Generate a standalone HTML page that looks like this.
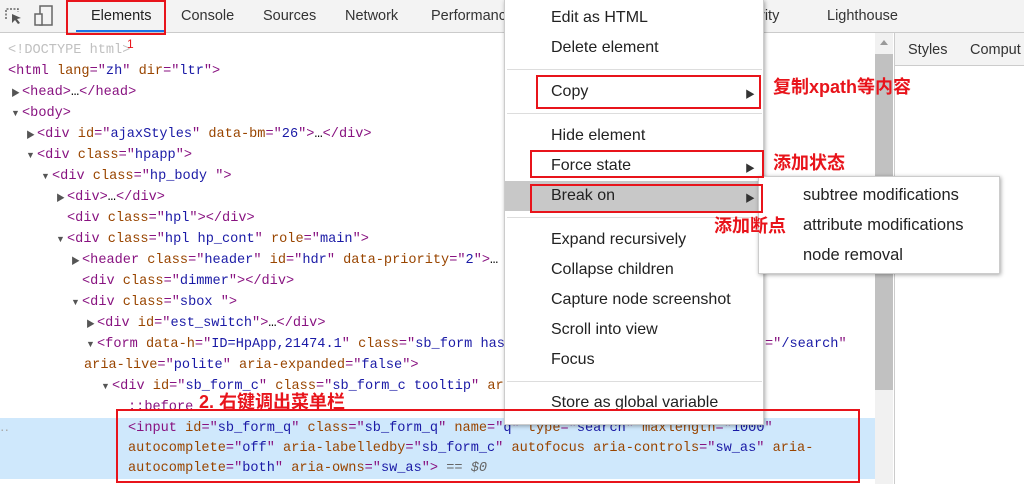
<!DOCTYPE html>
<html><head><meta charset="utf-8"><style>
*{margin:0;padding:0;box-sizing:border-box}
body{width:1024px;height:484px;overflow:hidden;background:#fff;position:relative;font-family:"Liberation Sans","Noto Sans CJK SC",sans-serif}
.a{position:absolute;white-space:nowrap}
.tb{position:absolute;left:0;top:0;width:1024px;height:33px;background:#f3f3f3;border-bottom:1px solid #cbcbcb}
.tab{position:absolute;top:8px;font-size:14.5px;color:#333}
.code{font-family:"Liberation Mono",monospace;font-size:13.6px;line-height:21px}
.t{color:#881280}.n{color:#994500}.v{color:#1a1aa6}.g{color:#aaa}
.tri{position:absolute;font-size:9px;color:#555}
.menu{position:absolute;left:504px;top:0;width:260px;height:425px;background:#fff;box-shadow:1px 1px 4px rgba(0,0,0,.35);border:1px solid #ccc;border-top:none}
.mi{position:absolute;left:46px;font-size:16px;color:#222;white-space:nowrap}
.sep{position:absolute;left:14px;width:262px;height:1px;background:#ddd}
.arr{position:absolute;left:240px;font-size:10px;color:#333}
.rb{position:absolute;border:2px solid #e8141b}
.ann{position:absolute;color:#e8141b;font-weight:bold;font-size:18px;white-space:nowrap}
</style></head><body>
<div class="tb"></div>
<svg class="a" style="left:4px;top:6px" width="20" height="20" viewBox="0 0 20 20"><path d="M2 13V3h12v3" fill="none" stroke="#666" stroke-width="1.5" stroke-dasharray="2 1.5"/><path d="M8 8l9 4-4 1 3 4-2 1-3-4-3 3z" fill="#555"/></svg>
<svg class="a" style="left:34px;top:5px" width="20" height="22" viewBox="0 0 20 22"><rect x="6" y="1" width="12" height="19" fill="none" stroke="#666" stroke-width="1.5"/><rect x="1" y="9" width="7" height="11" fill="#f3f3f3" stroke="#666" stroke-width="1.5"/></svg>
<div class="tab" style="left:91px;color:#222">Elements</div>
<div class="a" style="left:76px;top:30px;width:88px;height:2px;background:#1a73e8"></div>
<div class="tab" style="left:181px">Console</div>
<div class="tab" style="left:263px">Sources</div>
<div class="tab" style="left:345px">Network</div>
<div class="tab" style="left:431px">Performanc</div>
<div class="tab" style="left:760px">rity</div>
<div class="tab" style="left:827px">Lighthouse</div>
<div class="a" style="left:894px;top:33px;width:1px;height:451px;background:#ccc"></div>
<div class="a" style="left:895px;top:33px;width:129px;height:33px;background:#f3f3f3;border-bottom:1px solid #ccc"></div>
<div class="tab" style="left:908px;top:42px">Styles</div>
<div class="tab" style="left:970px;top:42px">Comput</div>
<div class="a" style="left:875px;top:33px;width:18px;height:451px;background:#f1f1f1"></div>
<div class="a" style="left:875px;top:54px;width:18px;height:336px;background:#c1c1c1"></div>
<div class="a" style="left:880px;top:40px;width:0;height:0;border-left:4px solid transparent;border-right:4px solid transparent;border-bottom:5px solid #999"></div>
<div class="a" style="left:0;top:418px;width:875px;height:61px;background:#cfe8fc"></div>
<div class="a code g" style="left:0;top:418px">‥</div>
<div class="code">
<div class="a" style="left:8px;top:40px;color:#c0c0c0">&lt;!DOCTYPE html&gt;</div>
<div class="a" style="left:8px;top:61px"><span class="t">&lt;html </span><span class="n">lang</span><span class="t">="</span><span class="v">zh</span><span class="t">" </span><span class="n">dir</span><span class="t">="</span><span class="v">ltr</span><span class="t">"&gt;</span></div>
<div class="a" style="left:22px;top:82px"><span class="t">&lt;head&gt;</span>…<span class="t">&lt;/head&gt;</span></div>
<div class="a" style="left:22px;top:103px"><span class="t">&lt;body&gt;</span></div>
<div class="a" style="left:37px;top:124px"><span class="t">&lt;div </span><span class="n">id</span><span class="t">="</span><span class="v">ajaxStyles</span><span class="t">" </span><span class="n">data-bm</span><span class="t">="</span><span class="v">26</span><span class="t">"&gt;</span>…<span class="t">&lt;/div&gt;</span></div>
<div class="a" style="left:37px;top:145px"><span class="t">&lt;div </span><span class="n">class</span><span class="t">="</span><span class="v">hpapp</span><span class="t">"&gt;</span></div>
<div class="a" style="left:52px;top:166px"><span class="t">&lt;div </span><span class="n">class</span><span class="t">="</span><span class="v">hp_body  </span><span class="t">"&gt;</span></div>
<div class="a" style="left:67px;top:187px"><span class="t">&lt;div&gt;</span>…<span class="t">&lt;/div&gt;</span></div>
<div class="a" style="left:67px;top:208px"><span class="t">&lt;div </span><span class="n">class</span><span class="t">="</span><span class="v">hpl</span><span class="t">"&gt;&lt;/div&gt;</span></div>
<div class="a" style="left:67px;top:229px"><span class="t">&lt;div </span><span class="n">class</span><span class="t">="</span><span class="v">hpl hp_cont</span><span class="t">" </span><span class="n">role</span><span class="t">="</span><span class="v">main</span><span class="t">"&gt;</span></div>
<div class="a" style="left:82px;top:250px"><span class="t">&lt;header </span><span class="n">class</span><span class="t">="</span><span class="v">header</span><span class="t">" </span><span class="n">id</span><span class="t">="</span><span class="v">hdr</span><span class="t">" </span><span class="n">data-priority</span><span class="t">="</span><span class="v">2</span><span class="t">"&gt;</span>…</div>
<div class="a" style="left:82px;top:271px"><span class="t">&lt;div </span><span class="n">class</span><span class="t">="</span><span class="v">dimmer</span><span class="t">"&gt;&lt;/div&gt;</span></div>
<div class="a" style="left:82px;top:292px"><span class="t">&lt;div </span><span class="n">class</span><span class="t">="</span><span class="v">sbox </span><span class="t">"&gt;</span></div>
<div class="a" style="left:97px;top:313px"><span class="t">&lt;div </span><span class="n">id</span><span class="t">="</span><span class="v">est_switch</span><span class="t">"&gt;</span>…<span class="t">&lt;/div&gt;</span></div>
<div class="a" style="left:97px;top:334px"><span class="t">&lt;form </span><span class="n">data-h</span><span class="t">="</span><span class="v">ID=HpApp,21474.1</span><span class="t">" </span><span class="n">class</span><span class="t">="</span><span class="v">sb_form has</span></div>
<div class="a" style="left:765px;top:334px"><span class="t">="</span><span class="v">/search</span><span class="t">"</span></div>
<div class="a" style="left:84px;top:355px"><span class="n">aria-live</span><span class="t">="</span><span class="v">polite</span><span class="t">" </span><span class="n">aria-expanded</span><span class="t">="</span><span class="v">false</span><span class="t">"&gt;</span></div>
<div class="a" style="left:112px;top:376px"><span class="t">&lt;div </span><span class="n">id</span><span class="t">="</span><span class="v">sb_form_c</span><span class="t">" </span><span class="n">class</span><span class="t">="</span><span class="v">sb_form_c tooltip</span><span class="t">" </span><span class="n">ar</span></div>
<div class="a" style="left:128px;top:397px;color:#881280">::before</div>
<div class="a" style="left:128px;top:419px;line-height:20px"><span class="t">&lt;input </span><span class="n">id</span><span class="t">="</span><span class="v">sb_form_q</span><span class="t">" </span><span class="n">class</span><span class="t">="</span><span class="v">sb_form_q</span><span class="t">" </span><span class="n">name</span><span class="t">="</span><span class="v">q</span><span class="t">" </span><span class="n">type</span><span class="t">="</span><span class="v">search</span><span class="t">" </span><span class="n">maxlength</span><span class="t">="</span><span class="v">1000</span><span class="t">"</span><br><span class="n">autocomplete</span><span class="t">="</span><span class="v">off</span><span class="t">" </span><span class="n">aria-labelledby</span><span class="t">="</span><span class="v">sb_form_c</span><span class="t">" </span><span class="n">autofocus aria-controls</span><span class="t">="</span><span class="v">sw_as</span><span class="t">" </span><span class="n">aria-</span><br><span class="n">autocomplete</span><span class="t">="</span><span class="v">both</span><span class="t">" </span><span class="n">aria-owns</span><span class="t">="</span><span class="v">sw_as</span><span class="t">"&gt;</span> <span style="color:#666">== <i>$0</i></span></div>
</div>
<span class="tri" style="left:11px;top:86px">▶</span><span class="tri" style="left:11px;top:108px">▼</span>
<span class="tri" style="left:26px;top:128px">▶</span><span class="tri" style="left:26px;top:150px">▼</span>
<span class="tri" style="left:41px;top:171px">▼</span><span class="tri" style="left:56px;top:191px">▶</span>
<span class="tri" style="left:56px;top:234px">▼</span><span class="tri" style="left:71px;top:254px">▶</span>
<span class="tri" style="left:71px;top:297px">▼</span><span class="tri" style="left:86px;top:317px">▶</span>
<span class="tri" style="left:86px;top:339px">▼</span><span class="tri" style="left:101px;top:381px">▼</span>
<div class="menu">
<div class="a" style="left:0;top:181px;width:253px;height:30px;background:#c8c8c8"></div>
<div class="mi" style="top:9px">Edit as HTML</div>
<div class="mi" style="top:39px">Delete element</div>
<div class="sep" style="left:2px;width:255px;top:69px"></div>
<div class="mi" style="top:83px">Copy</div><div class="arr" style="top:86px">▶</div>
<div class="sep" style="left:2px;width:255px;top:113px"></div>
<div class="mi" style="top:127px">Hide element</div>
<div class="mi" style="top:157px">Force state</div><div class="arr" style="top:160px">▶</div>
<div class="mi" style="top:187px">Break on</div><div class="arr" style="top:190px">▶</div>
<div class="sep" style="left:2px;width:255px;top:217px"></div>
<div class="mi" style="top:231px">Expand recursively</div>
<div class="mi" style="top:261px">Collapse children</div>
<div class="mi" style="top:291px">Capture node screenshot</div>
<div class="mi" style="top:321px">Scroll into view</div>
<div class="mi" style="top:351px">Focus</div>
<div class="sep" style="left:2px;width:255px;top:381px"></div>
<div class="mi" style="top:394px">Store as global variable</div>
</div>
<div class="a" style="left:758px;top:176px;width:242px;height:98px;background:#fff;box-shadow:1px 1px 4px rgba(0,0,0,.35);border:1px solid #ccc"></div>
<div class="mi" style="left:803px;top:186px;font-size:16.5px">subtree modifications</div>
<div class="mi" style="left:803px;top:216px;font-size:16.5px">attribute modifications</div>
<div class="mi" style="left:803px;top:246px;font-size:16.5px">node removal</div>
<div class="rb" style="left:66px;top:0;width:100px;height:35px"></div>
<div class="rb" style="left:536px;top:75px;width:225px;height:34px"></div>
<div class="rb" style="left:530px;top:150px;width:234px;height:28px"></div>
<div class="rb" style="left:530px;top:184px;width:233px;height:29px"></div>
<div class="rb" style="left:116px;top:409px;width:744px;height:74px"></div>
<div class="ann" style="left:127px;top:37px;font-size:12px;font-weight:normal">1</div>
<div class="ann" style="left:773px;top:73px">复制xpath等内容</div>
<div class="ann" style="left:773px;top:149px">添加状态</div>
<div class="ann" style="left:714px;top:212px">添加断点</div>
<div class="ann" style="left:199px;top:388px">2. 右键调出菜单栏</div>
</body></html>
